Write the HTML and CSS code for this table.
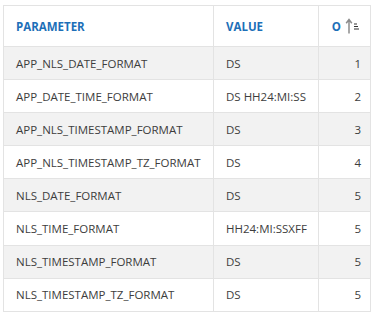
FILE: index.html
```html
<!DOCTYPE html>
<html>
<head>
<meta charset="utf-8">
<link rel="stylesheet" href="styles.css">
</head>
<body>
<table class="grid">
  <colgroup><col class="c1"><col class="c2"><col class="c3"></colgroup>
  <thead>
    <tr>
      <th>PARAMETER</th>
      <th>VALUE</th>
      <th class="num"><span class="hd">O<svg class="sort" width="16" height="16" viewBox="0 0 16 16"><path d="M5 15.5V2M2.2 5.2L5 1.5l2.8 3.7" fill="none" stroke="#8c8c8c" stroke-width="1.5"/><path d="M10 6h3M10 8.5h4M10 11h5" stroke="#333" stroke-width="1"/></svg></span></th>
    </tr>
  </thead>
  <tbody>
    <tr><td>APP_NLS_DATE_FORMAT</td><td>DS</td><td class="num">1</td></tr>
    <tr><td>APP_DATE_TIME_FORMAT</td><td>DS HH24:MI:SS</td><td class="num">2</td></tr>
    <tr><td>APP_NLS_TIMESTAMP_FORMAT</td><td>DS</td><td class="num">3</td></tr>
    <tr><td>APP_NLS_TIMESTAMP_TZ_FORMAT</td><td>DS</td><td class="num">4</td></tr>
    <tr><td>NLS_DATE_FORMAT</td><td>DS</td><td class="num">5</td></tr>
    <tr><td>NLS_TIME_FORMAT</td><td>HH24:MI:SSXFF</td><td class="num">5</td></tr>
    <tr><td>NLS_TIMESTAMP_FORMAT</td><td>DS</td><td class="num">5</td></tr>
    <tr><td>NLS_TIMESTAMP_TZ_FORMAT</td><td>DS</td><td class="num">5</td></tr>
  </tbody>
</table>
</body>
</html>
```
FILE: styles.css
```css
html, body {
  margin: 0;
  padding: 0;
  background: #fff;
}
body {
  padding: 5px 0 0 3px;
  font-family: "Open Sans", "Noto Sans", sans-serif;
  font-size: 11.5px;
  color: #3d3d3d;
}
.grid {
  border-collapse: collapse;
  table-layout: fixed;
  width: 367px;
  border: 1px solid #e3e3e3;
}
.c1 { width: 210px; }
.c2 { width: 105px; }
.c3 { width: 52px; }
.grid th, .grid td {
  border: 1px solid #e3e3e3;
  padding: 0 12px;
  text-align: left;
  white-space: nowrap;
  overflow: hidden;
}
.grid th {
  height: 40px;
  color: #1d6fb8;
  font-weight: 700;
  font-size: 11.5px;
}
.grid td {
  height: 32.1px;
}
.grid tbody tr:nth-child(odd) td {
  background: #f2f2f2;
}
.grid .num {
  text-align: right;
  padding-right: 9px;
}
.hd {
  display: inline-flex;
  align-items: center;
  gap: 3px;
  margin-right: 1px;
}
.sort {
  display: block;
}
```
